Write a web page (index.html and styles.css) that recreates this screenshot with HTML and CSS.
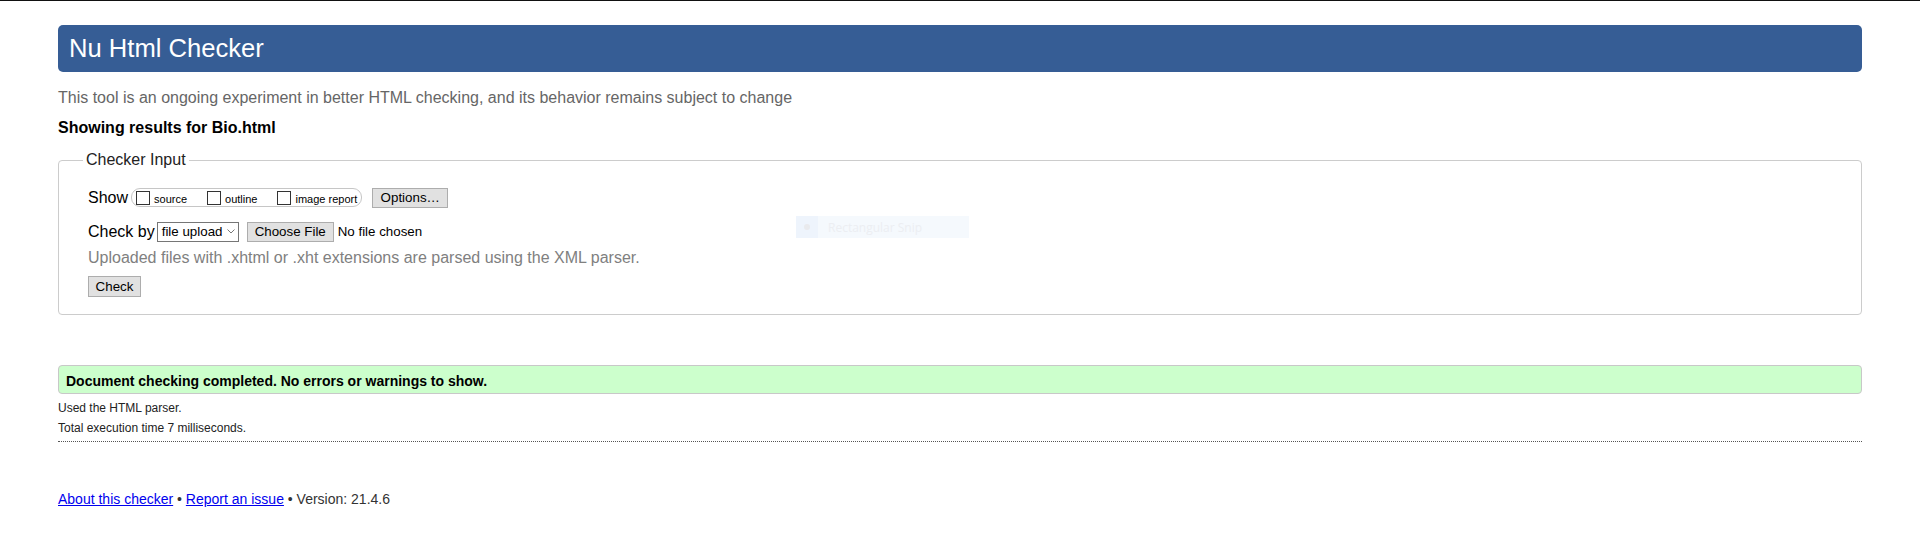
FILE: index.html
```html
<!DOCTYPE html>
<html lang="en">
<head>
<meta charset="utf-8">
<title>Showing results for Bio.html - Nu Html Checker</title>
<link rel="stylesheet" href="styles.css">
</head>
<body>
<div class="page">
  <h1 class="title">Nu Html Checker</h1>
  <p class="intro">This tool is an ongoing experiment in better HTML checking, and its behavior remains subject to change</p>
  <p class="showing">Showing results for Bio.html</p>

  <fieldset class="input-box">
    <legend class="legend">Checker Input</legend>
    <div class="row row-show">
      <span class="label">Show</span>
      <span class="show-group">
        <span class="opt"><span class="cb"></span><span class="opt-label">source</span></span>
        <span class="opt"><span class="cb"></span><span class="opt-label">outline</span></span>
        <span class="opt"><span class="cb"></span><span class="opt-label">image report</span></span>
      </span>
      <span class="btn btn-options">Options…</span>
    </div>
    <div class="row row-check">
      <span class="label">Check by</span>
      <span class="select">file upload<svg class="chev" width="8" height="5" viewBox="0 0 8 5"><path d="M0.5 0.5 L4 4 L7.5 0.5" fill="none" stroke="#777" stroke-width="1"/></svg></span>
      <span class="btn btn-file">Choose File</span>
      <span class="nofile">No file chosen</span>
    </div>
    <p class="hint">Uploaded files with .xhtml or .xht extensions are parsed using the XML parser.</p>
    <div class="row row-submit">
      <span class="btn btn-check">Check</span>
    </div>
  </fieldset>

  <div class="success">Document checking completed. No errors or warnings to show.</div>
  <div class="stats">
    <p class="stat">Used the HTML parser.</p>
    <p class="stat">Total execution time 7 milliseconds.</p>
  </div>

  <p class="footer"><a href="#" class="link">About this checker</a> • <a href="#" class="link">Report an issue</a> • Version: 21.4.6</p>
</div>

<div class="snip"><span class="snip-icon"><span class="snip-dot"></span></span><span class="snip-text">Rectangular Snip</span></div>
</body>
</html>
```
FILE: styles.css
```css
html, body {
  margin: 0;
  padding: 0;
  background: #fff;
}
body {
  border-top: 1px solid #111;
  font-family: "Liberation Sans", Arial, sans-serif;
  font-size: 16px;
  color: #000;
  position: relative;
  min-height: 538px;
}
.page {
  padding: 24px 58px 0;
}
.title {
  margin: 0;
  height: 47px;
  line-height: 47px;
  padding: 0 11px;
  background: #365d95;
  color: #fff;
  font-size: 25.6px;
  font-weight: normal;
  border-radius: 5px;
}
.intro {
  margin: 16px 0 0;
  line-height: 20px;
  color: #666;
}
.showing {
  margin: 10px 0 0;
  line-height: 20px;
  font-weight: bold;
  color: #000;
}
.input-box {
  margin: 13px 0 0;
  padding: 0 28px 17px 29px;
  border: 1px solid #ccc;
  border-radius: 4px;
  min-width: 0;
}
.legend {
  margin-left: -5px;
  padding: 0 3px;
  font-size: 16px;
  line-height: 18px;
  color: #222;
}
.row {
  display: flex;
  align-items: center;
  height: 21px;
}
.row-show {
  margin-top: 18px;
}
.row-check {
  margin-top: 13px;
}
.label {
  line-height: 18px;
}
.show-group {
  display: inline-flex;
  align-items: center;
  box-sizing: border-box;
  height: 19px;
  margin-left: 3px;
  padding: 0 4px 0 4px;
  border: 1px solid #c6c6c6;
  border-radius: 9px;
}
.opt {
  display: inline-flex;
  align-items: center;
  margin-right: 20px;
}
.opt:last-child {
  margin-right: 0;
}
.cb {
  box-sizing: border-box;
  width: 14px;
  height: 14px;
  border: 1px solid #333;
  background: #fff;
  margin-right: 4px;
  margin-top: 1px;
}
.opt-label {
  font-size: 11px;
  line-height: 13px;
  margin-top: 3px;
  color: #000;
}
.btn {
  display: inline-flex;
  align-items: center;
  justify-content: center;
  box-sizing: border-box;
  border: 1px solid #adadad;
  background: #e1e1e1;
  font-size: 13.33px;
  color: #000;
}
.btn-options {
  margin-left: 10px;
  width: 76px;
  height: 20px;
}
.select {
  display: inline-flex;
  align-items: center;
  box-sizing: border-box;
  height: 20px;
  width: 82px;
  margin-left: 2px;
  padding: 0 0 0 4px;
  border: 1px solid #767676;
  background: #fff;
  font-size: 13.33px;
}
.chev {
  margin-left: 5px;
}
.btn-file {
  margin-left: 8px;
  width: 87px;
  height: 20px;
}
.nofile {
  margin-left: 4px;
  font-size: 13.33px;
}
.hint {
  margin: 7px 0 0;
  line-height: 18px;
  color: #808080;
}
.row-submit {
  margin-top: 9px;
}
.btn-check {
  width: 53px;
  height: 21px;
}
.success {
  margin-top: 50px;
  box-sizing: border-box;
  height: 29px;
  padding: 3px 7px 0;
  line-height: 24px;
  background: #ccffcc;
  border: 1px solid #c8c8c8;
  border-radius: 4px;
  font-size: 14px;
  font-weight: bold;
  color: #000;
}
.stats {
  margin-top: 4px;
  padding-bottom: 3px;
  border-bottom: 1px dotted #555;
}
.stat {
  margin: 0;
  font-size: 12px;
  line-height: 20px;
  color: #222;
}
.footer {
  margin: 49px 0 0;
  font-size: 14px;
  line-height: 16px;
  color: #333;
}
.link {
  color: #0000ee;
  text-decoration: underline;
}
.snip {
  position: absolute;
  left: 796px;
  top: 215px;
  width: 173px;
  height: 22px;
  display: flex;
  align-items: center;
  background: #f5f9fd;
}
.snip-icon {
  width: 22px;
  height: 22px;
  background: #eef4fc;
  display: flex;
  align-items: center;
  justify-content: center;
}
.snip-dot {
  width: 6px;
  height: 6px;
  border-radius: 50%;
  background: #e9eaed;
}
.snip-text {
  margin-left: 10px;
  font-family: "Open Sans", sans-serif;
  font-size: 12px;
  color: #eceef2;
}
```
